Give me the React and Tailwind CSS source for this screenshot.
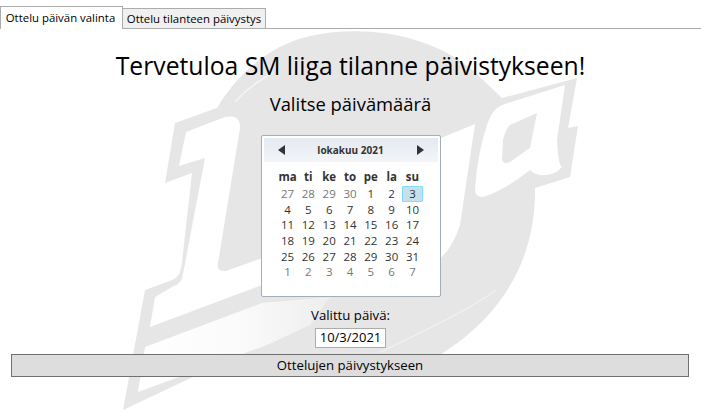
const leading = [27, 28, 29, 30];
const october = [1, 2, 3, 4, 5, 6, 7, 8, 9, 10, 11, 12, 13, 14, 15, 16, 17, 18, 19, 20, 21, 22, 23, 24, 25, 26, 27, 28, 29, 30, 31];
const trailing = [1, 2, 3, 4, 5, 6, 7];
const weekdays = ["ma", "ti", "ke", "to", "pe", "la", "su"];

function LiigaLogo() {
	return (
		<svg className="absolute left-0 top-0 pointer-events-none" width="701" height="412" viewBox="0 0 701 412">
			<defs>
				<linearGradient id="swoosh" x1="0" x2="1" y1="0" y2="0">
					<stop offset="0" stopColor="#ffffff" />
					<stop offset="0.5" stopColor="#fbfbfb" />
					<stop offset="1" stopColor="#eeeeee" />
				</linearGradient>
			</defs>
			<path
				fill="#e6e6e6"
				d="M217 108 C235 78 262 52 296 40 C345 24 420 28 470 68 L480 77 L502 98 L577 78 L568 128 L578 126 L570 177 L535 188 C536 250 510 310 443 353 L430 362 L193 377 L123 410 L145 290 L172 280 Q181 277 182 262 L192 173 L165 183 L175 123 Z"
			/>
			<path
				fill="#ffffff"
				d="M186 132 L225 117 Q241 114 240 128 L218 263 Q216 272 226 271 L262 258 L262 285 L150 327 L155 297 L172 287 Q182 284 183 274 L205 158 L179 166 Z"
			/>
			<path fill="url(#swoosh)" d="M145 347 L262 303 L330 297 L310 325 L267 345 L138 392 Z" />
			<path fill="#ffffff" d="M436 140 L475 124 L460 225 Q452 250 436 262 Z" />
			<path
				fill="#ffffff"
				d="M475 188 Q478 150 488 122 Q492 110 502 105 L565 85 L557 140 Q558 165 562 167 Q555 175 545 175 Q535 176 530 170 Q505 190 483 197 Q474 197 475 188 Z"
			/>
			<path fill="#e6e6e6" d="M537 113 L510 125 Q505 130 503 140 L502 160 Q504 165 510 162 L530 148 Z" />
			<path fill="none" stroke="#f4f4f4" strokeWidth="1.5" d="M235 102 Q250 85 273 73" />
			<path fill="none" stroke="#f0f0f0" strokeWidth="1.5" d="M380 352 Q470 310 496 290" />
		</svg>
	);
}

function TriangleButton({ dir }) {
	return (
		<svg width="7" height="10" viewBox="0 0 7 10" className="shrink-0">
			<path d={dir === "left" ? "M7 0 V10 L0 5 Z" : "M0 0 V10 L7 5 Z"} fill="#333333" />
		</svg>
	);
}

function Calendar() {
	return (
		<div className="w-[180px] h-[162px] border border-[#a3aeb9] rounded-[2px] bg-white p-[2px] mt-[17px]">
			<div className="h-[24px] flex items-center justify-between px-[14px] bg-gradient-to-b from-[#e4eaf0] to-[#f3f5f8]">
				<TriangleButton dir="left" />
				<span className="text-[10px] font-bold text-[#333333]">lokakuu 2021</span>
				<TriangleButton dir="right" />
			</div>
			<div className="grid grid-cols-[repeat(7,20.83px)] justify-center mt-[7px] text-[11.5px] text-[#333333] pr-[1px]">
				{weekdays.map((d) => (
					<div key={d} className="h-[16px] mb-px flex items-center justify-center font-bold">
						{d}
					</div>
				))}
				{leading.map((d) => (
					<div key={`l${d}`} className="h-[15.6px] flex items-center justify-center text-[#777777]">
						{d}
					</div>
				))}
				{october.map((d) => (
					<div
						key={d}
						className={
							d === 3
								? "h-[15.6px] border border-[#7fdcff] rounded-[1px] bg-[#c5e0ea] flex items-center justify-center"
								: "h-[15.6px] flex items-center justify-center"
						}
					>
						{d}
					</div>
				))}
				{trailing.map((d) => (
					<div key={`t${d}`} className="h-[15.6px] flex items-center justify-center text-[#777777]">
						{d}
					</div>
				))}
			</div>
		</div>
	);
}

export default function App() {
	return (
		<div className="relative w-[701px] h-[412px] overflow-hidden bg-white text-black font-['Open_Sans','Noto_Sans',sans-serif]">
			<LiigaLogo />
			<div className="relative flex flex-col h-full">
				<div className="flex items-end h-[29px] pt-[6px] border-b border-[#acacac]">
					<div className="w-[123px] h-[23px] -mb-px pr-[2px] bg-white border border-b-0 border-[#acacac] flex items-center justify-center text-[11.4px] text-black">
						Ottelu päivän valinta
					</div>
					<div className="w-[144px] h-[20px] -ml-px bg-[#f0f0f0] border border-b-0 border-[#acacac] flex items-center justify-center text-[11.4px]">
						Ottelu tilanteen päivystys
					</div>
				</div>
				<div className="flex flex-col items-center">
					<h1 className="mt-[19px] h-[36px] leading-[36px] text-[24.7px] font-normal whitespace-nowrap">
						Tervetuloa SM liiga tilanne päivistykseen!
					</h1>
					<h2 className="mt-[6px] h-[28px] leading-[28px] text-[18.4px] font-normal whitespace-nowrap">Valitse päivämäärä</h2>
					<Calendar />
					<div className="mt-[8px] h-[20px] leading-[20px] text-[13.2px]">Valittu päivä:</div>
					<div className="mt-[3px] w-[71px] h-[20px] bg-white border border-[#acacac] flex items-center justify-center text-[13px] text-black">
						10/3/2021
					</div>
				</div>
				<button className="mt-[6px] ml-[11px] mr-[12px] h-[23px] bg-[#dddddd] border border-[#707070] text-[13.2px] text-black flex items-center justify-center">
					Ottelujen päivystykseen
				</button>
			</div>
		</div>
	);
}
